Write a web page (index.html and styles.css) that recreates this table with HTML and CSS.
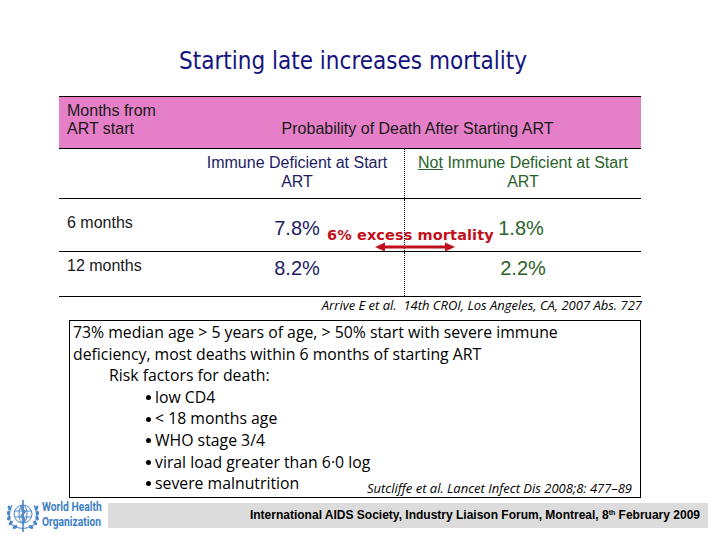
FILE: index.html
```html
<!DOCTYPE html>
<html>
<head>
<meta charset="utf-8">
<link rel="stylesheet" href="styles.css">
</head>
<body>
<div class="slide">
  <h1 class="title">Starting late increases mortality</h1>

  <div class="table">
    <div class="row head">
      <div class="c1">Months from<br>ART start</div>
      <div class="c23">Probability of Death After Starting ART</div>
    </div>
    <div class="row sub">
      <div class="c1"></div>
      <div class="c2 navy">Immune Deficient at Start<br>ART</div>
      <div class="c3 green"><u>Not</u> Immune Deficient at Start<br>ART</div>
    </div>
    <div class="row r1">
      <div class="c1">6 months</div>
      <div class="c2 num navy">7.8%</div>
      <div class="c3 num green">1.8%</div>
      <div class="excess">6% excess mortality</div>
      <svg class="arrow" width="80" height="10" viewBox="0 0 80 10">
        <path d="M8 5 H72" stroke="#c0101c" stroke-width="3"/>
        <path d="M0 5 L10 0.5 L10 9.5 Z" fill="#c0101c"/>
        <path d="M80 5 L70 0.5 L70 9.5 Z" fill="#c0101c"/>
      </svg>
    </div>
    <div class="row r2">
      <div class="c1">12 months</div>
      <div class="c2 num navy">8.2%</div>
      <div class="c3 num green">2.2%</div>
    </div>
  </div>

  <p class="cite1">Arrive E et al.&nbsp; 14th CROI, Los Angeles, CA, 2007 Abs. 727</p>

  <div class="box">
    <div class="line">73% median age &gt; 5 years of age, &gt; 50% start with severe immune</div>
    <div class="line">deficiency, most deaths within 6 months of starting ART</div>
    <div class="line ind1">Risk factors for death:</div>
    <div class="line ind2"><span class="dot"></span>low CD4</div>
    <div class="line ind2"><span class="dot"></span>&lt; 18 months age</div>
    <div class="line ind2"><span class="dot"></span>WHO stage 3/4</div>
    <div class="line ind2"><span class="dot"></span>viral load greater than 6·0 log</div>
    <div class="line last">
      <span class="ind2b"><span class="dot"></span>severe malnutrition</span>
      <span class="cite2">Sutcliffe et al. Lancet Infect Dis 2008;8: 477–89</span>
    </div>
  </div>

  <footer class="footer">
    <div class="who">
      <svg class="emblem" width="36" height="36" viewBox="0 0 36 36">
        <g fill="none" stroke="#4a86c8" stroke-width="1">
          <circle cx="18" cy="16" r="9"/>
          <ellipse cx="18" cy="16" rx="4" ry="9"/>
          <path d="M9.5 13 H26.5 M9.5 19 H26.5 M18 7 V25"/>
          <path d="M7 27 Q2 18 7 7"/>
          <path d="M29 27 Q34 18 29 7"/>
          <path d="M7 27 Q18 34 29 27"/>
          <path d="M18 2 V34" stroke-width="1.6"/>
          <path d="M18 8 q-4 2 0 4 q4 2 0 4 q-4 2 0 4 q4 2 0 4" stroke-width="1.4"/>
        </g>
        <g fill="#4a86c8">
          <ellipse cx="4.5" cy="10" rx="1.6" ry="2.6" transform="rotate(-20 4.5 10)"/>
          <ellipse cx="3.5" cy="15" rx="1.6" ry="2.6"/>
          <ellipse cx="3.8" cy="20" rx="1.6" ry="2.6" transform="rotate(20 3.8 20)"/>
          <ellipse cx="5.8" cy="25" rx="1.6" ry="2.6" transform="rotate(40 5.8 25)"/>
          <ellipse cx="10" cy="29" rx="1.6" ry="2.6" transform="rotate(60 10 29)"/>
          <ellipse cx="31.5" cy="10" rx="1.6" ry="2.6" transform="rotate(20 31.5 10)"/>
          <ellipse cx="32.5" cy="15" rx="1.6" ry="2.6"/>
          <ellipse cx="32.2" cy="20" rx="1.6" ry="2.6" transform="rotate(-20 32.2 20)"/>
          <ellipse cx="30.2" cy="25" rx="1.6" ry="2.6" transform="rotate(-40 30.2 25)"/>
          <ellipse cx="26" cy="29" rx="1.6" ry="2.6" transform="rotate(-60 26 29)"/>
        </g>
      </svg>
      <div class="who-text">World Health<br>Organization</div>
    </div>
    <div class="bar">International AIDS Society, Industry Liaison Forum, Montreal, 8<sup>th</sup> February 2009</div>
  </footer>
</div>
</body>
</html>
```

FILE: styles.css
```css
* { box-sizing: border-box; }
html, body { margin: 0; padding: 0; background: #fff; }
body { width: 720px; height: 540px; overflow: hidden; font-family: "Liberation Sans", Arial, sans-serif; }

.slide { width: 720px; height: 540px; }

.title {
  margin: 0;
  padding-top: 46px;
  padding-right: 14px;
  height: 96px;
  line-height: 30px;
  text-align: center;
  font-family: "DejaVu Sans", sans-serif;
  font-stretch: condensed;
  font-weight: normal;
  font-size: 24px;
  color: #14147e;
}

.table {
  margin-left: 59px;
  width: 582px;
  border-bottom: 1px solid #000;
  font-size: 16px;
  color: #1a1a1a;
}
.row {
  display: grid;
  grid-template-columns: 131px 214px 237px;
  border-top: 1px solid #000;
  position: relative;
}
.head { background: #e57fc8; height: 52px; }
.head .c1 { padding: 5px 0 0 8px; line-height: 18px; }
.head .c23 { grid-column: 2 / 4; padding-top: 23px; line-height: 18px; text-align: center; padding-left: 4px; }

.sub { height: 50px; }
.sub .c2, .sub .c3 { text-align: center; line-height: 19px; padding-top: 4px; white-space: nowrap; }
.c3 { border-left: 1px dotted #000; }

.navy { color: #1c1c64; }
.green { color: #2a622a; }
.green u { text-decoration-color: #2a622a; }

.r1 { height: 53px; }
.r2 { height: 45px; }
.c1 { padding-left: 8px; }
.r1 .c1 { padding-top: 16px; line-height: 16px; }
.r2 .c1 { padding-top: 6px; line-height: 16px; }
.num { font-size: 20px; line-height: 24px; text-align: center; }
.r1 .num { padding-top: 17px; }
.r2 .num { padding-top: 4px; }
.r1 .c3 { padding-right: 4px; }

.excess {
  position: absolute;
  left: 268px;
  top: 28px;
  line-height: 16px;
  font-family: "DejaVu Sans", sans-serif;
  font-weight: bold;
  font-size: 14.5px;
  color: #c0101c;
  letter-spacing: 0.1px;
  white-space: nowrap;
}
.arrow { position: absolute; left: 316px; top: 43px; }

.cite1 {
  margin: 1px 0 0 59px;
  width: 583px;
  text-align: right;
  font-family: "Open Sans", sans-serif;
  font-style: italic;
  font-size: 13px;
  line-height: 14px;
  color: #000;
  white-space: nowrap;
}

.box {
  margin: 8px 0 0 69px;
  width: 572px;
  height: 178px;
  border: 1px solid #000;
  padding: 1px 8px 0 3px;
  font-family: "Open Sans", sans-serif;
  font-size: 15.8px;
  color: #000;
}
.line { line-height: 21.6px; white-space: nowrap; }
.ind1 { padding-left: 36px; }
.ind2 { padding-left: 73px; }
.last { display: flex; justify-content: space-between; }
.ind2b { padding-left: 73px; }
.dot {
  display: inline-block;
  width: 5px; height: 5px;
  border-radius: 50%;
  background: #000;
  margin-right: 4px;
  vertical-align: middle;
  position: relative;
  top: -1px;
}
.cite2 {
  font-style: italic;
  font-size: 13px;
  padding-top: 5px;
}

.footer {
  display: flex;
  align-items: flex-start;
  padding-left: 5px;
}
.who { display: flex; width: 103px; flex: none; overflow: hidden; }
.emblem { display: block; flex: none; }
.who-text {
  margin-left: 1px;
  padding-top: 1px;
  font-family: "Roboto", "Liberation Sans", sans-serif;
  font-weight: bold;
  font-size: 13.5px;
  line-height: 14.5px;
  color: #3d80c4;
  white-space: nowrap;
  transform: scaleX(0.76);
  transform-origin: left top;
}
.bar {
  margin-top: 5px;
  width: 600px;
  flex: none;
  height: 25px;
  background: #dcdcdc;
  text-align: right;
  padding-right: 8px;
  line-height: 25px;
  font-weight: bold;
  font-size: 12px;
  color: #000;
  white-space: nowrap;
}
.bar sup { font-size: 7px; vertical-align: 4px; line-height: 0; }
```
